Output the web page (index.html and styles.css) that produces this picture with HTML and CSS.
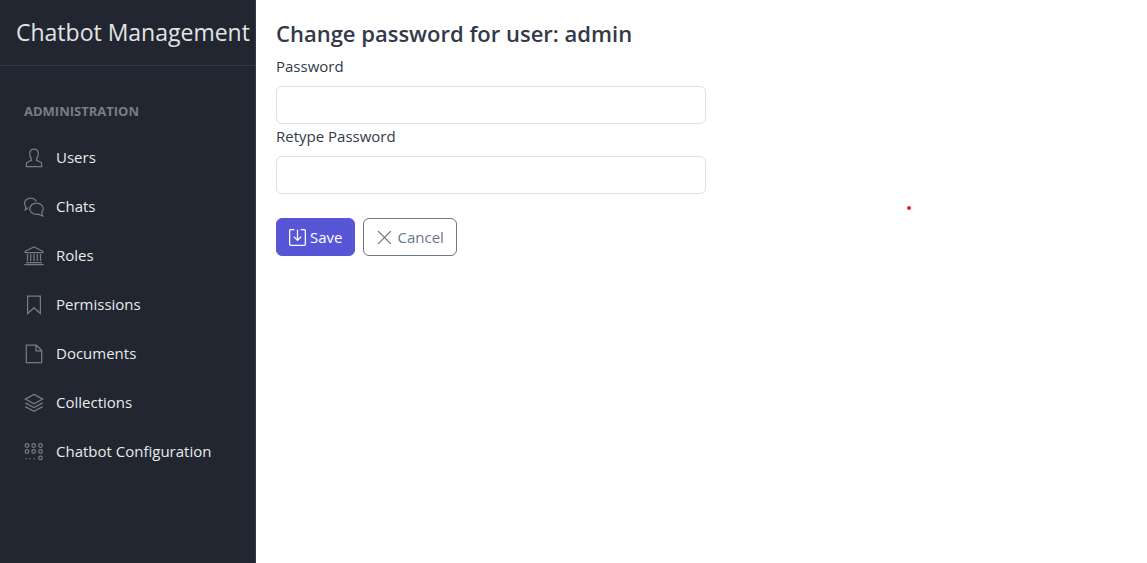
FILE: index.html
```html
<!DOCTYPE html>
<html lang="en">
<head>
<meta charset="utf-8">
<meta name="viewport" content="width=device-width, initial-scale=1">
<title>Chatbot Management</title>
<link rel="stylesheet" href="styles.css">
</head>
<body>
<div class="layout">
  <aside class="sidebar">
    <div class="sidebar-brand">Chatbot Management</div>
    <nav class="sidebar-nav" aria-label="Administration">
      <h2 class="nav-title">Administration</h2>
      <a class="nav-link" href="#"><svg class="icon" viewBox="0 0 20 20"><path d="M7.400 12.400V11C6.300 9.700 5.700 7.900 5.700 5.600C5.700 2.700 7.300 1 10 1s4.300 1.700 4.300 4.600c0 2.300-.6 4.100-1.700 5.400v1.400l4.100 1.900c.6.300.9.800.9 1.400V18.500H2.400v-2.800c0-.6.300-1.100.9-1.400z"/></svg>Users</a>
      <a class="nav-link" href="#"><svg class="icon" viewBox="0 0 20 20"><path d="M4.300 10.500C3.500 11.700 2.500 12.500 1.100 12.900C1.600 11.800 1.900 10.700 1.700 9.600C.8 8.600.6 7.600.6 6.500C.6 3.400 3.400 1 6.700 1c2.500 0 4.700 1.400 5.600 3.500M12.500 6c3.700 0 6.700 2.500 6.700 5.700 0 1.500-.6 2.800-1.500 3.800-.1 1.400.4 2.500 1.300 3.500-1.700-.1-3.100-.8-4.200-1.900-.7.200-1.500.3-2.300.3-3.700 0-6.700-2.500-6.700-5.700S8.800 6 12.500 6z"/></svg>Chats</a>
      <a class="nav-link" href="#"><svg class="icon" viewBox="0 0 20 20"><path d="M1.200 6.500V5.300L10 1l8.800 4.300v1.200zM2 16.500h16M.3 18.700h19.400M3.500 8v7M6.700 8v7M10 8v7M13.300 8v7M16.500 8v7"/></svg>Roles</a>
      <a class="nav-link" href="#"><svg class="icon" viewBox="0 0 20 20"><path d="M3.600 1.200h12.800v17.300L10 12.700l-6.400 5.800z"/></svg>Permissions</a>
      <a class="nav-link" href="#"><svg class="icon" viewBox="0 0 20 20"><path d="M2.300 1.200h10l5.400 5.400v12H2.300zM12 1.200v5.600h5.700"/></svg>Documents</a>
      <a class="nav-link" href="#"><svg class="icon" viewBox="0 0 20 20"><path d="M10 1.400l8.700 4.700L10 10.800 1.300 6.100zM1.300 9.900l8.700 4.700 8.700-4.700M1.300 13.600l8.700 4.700 8.700-4.700"/></svg>Collections</a>
      <a class="nav-link" href="#"><svg class="icon" viewBox="0 0 20 20"><circle cx="3" cy="3.500" r="1.800"/><circle cx="9.700" cy="3.500" r="1.800"/><circle cx="16.500" cy="3.500" r="1.800"/><circle cx="3" cy="9.500" r="1.800"/><circle cx="9.700" cy="9.500" r="1.800"/><circle cx="16.500" cy="9.500" r="1.800"/><circle cx="16.500" cy="15.900" r="1.800"/><path d="M1.500 16.500h1.200M5 16.500h1.200M9.500 16.500h1.200"/></svg>Chatbot Configuration</a>
    </nav>
  </aside>
  <main class="content">
    <h1 class="page-title">Change password for user: admin</h1>
    <form class="password-form">
      <label class="form-label" for="password">Password</label>
      <input class="form-control" id="password" type="password">
      <label class="form-label" for="retype">Retype Password</label>
      <input class="form-control" id="retype" type="password">
      <div class="actions">
        <button class="btn btn-primary" type="submit"><svg class="btn-icon" viewBox="0 0 16 16"><path d="M5 .6H1.600q-1 0-1 1v12.800q0 1 1 1h12.800q1 0 1-1V1.600q0-1-1-1H11M8 .6v9.800M4.500 7.200L8 10.700l3.500-3.500"/></svg>Save</button>
        <button class="btn btn-outline" type="button"><svg class="btn-icon" viewBox="0 0 16 16"><path d="M2 2l12 12M14 2L2 14"/></svg>Cancel</button>
      </div>
    </form>
    <span class="marker"></span>
  </main>
</div>
</body>
</html>
```
FILE: styles.css
```css
* {
  box-sizing: border-box;
}

body {
  margin: 0;
  background: #fff;
  color: #323a49;
  font: 15px/24px "Open Sans", "Noto Sans", sans-serif;
}

.layout {
  display: flex;
  min-height: 100vh;
}

.sidebar {
  flex: 0 0 256px;
  min-width: 0;
  background: #212631;
  border-right: 1px solid #323a49;
  color: #e3e4e6;
}

.sidebar-brand {
  padding: 16px 0 16px 16px;
  border-bottom: 1px solid #323a49;
  font-size: 23px;
  line-height: 33px;
  white-space: nowrap;
}

.sidebar-nav {
  display: flex;
  flex-direction: column;
  padding: 8px;
}

.nav-title {
  margin: 16px 0 0;
  padding: 12px 16px;
  color: #7a7d83;
  font-size: 13px;
  font-weight: 700;
  line-height: 19px;
  text-transform: uppercase;
}

.nav-link {
  display: flex;
  align-items: center;
  gap: 12px;
  padding: 12px 16px;
  color: #e9eaeb;
  line-height: 25px;
  text-decoration: none;
  white-space: nowrap;
}

.icon {
  width: 20px;
  height: 20px;
  fill: none;
  stroke: #777b85;
  stroke-width: 1.25;
}

.content {
  position: relative;
  flex: 1;
  min-width: 0;
  padding: 18px 12px 18px 20px;
}

.page-title {
  margin: 0 0 6px;
  font-size: 22px;
  font-weight: 600;
  line-height: 30px;
}

.password-form {
  display: flex;
  flex-direction: column;
  width: 50%;
  min-width: 280px;
}

.form-label {
  margin-bottom: 8px;
}

.form-control {
  width: 100%;
  height: 38px;
  padding: 6px 12px;
  border: 1px solid #dbdfe6;
  border-radius: 6px;
  background: #fff;
  color: inherit;
  font: inherit;
}

.actions {
  display: flex;
  gap: 8px;
  margin-top: 24px;
}

.btn {
  display: flex;
  align-items: center;
  gap: 4px;
  padding: 6px 12px;
  border: 1px solid;
  border-radius: 6px;
  font: inherit;
}

.btn-primary {
  border-color: #5856d6;
  background: #5856d6;
  color: #fff;
}

.btn-outline {
  border-color: #6b7785;
  background: #fff;
  color: #6b7785;
}

.btn-icon {
  width: 17px;
  height: 17px;
  fill: none;
  stroke: currentColor;
  stroke-width: 1.2;
}

.marker {
  position: absolute;
  top: 206px;
  left: 651px;
  width: 4px;
  height: 4px;
  border-radius: 2px;
  background: #ed1c24;
}
```
